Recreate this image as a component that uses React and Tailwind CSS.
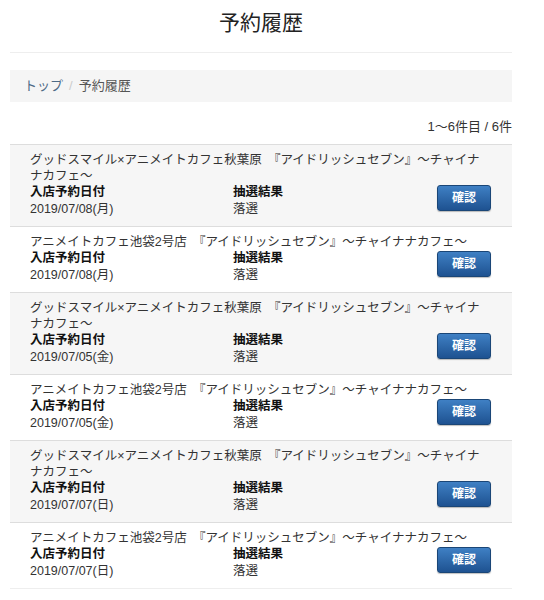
import React from 'react'

const rows = [
  { shop: 'グッドスマイル×アニメイトカフェ秋葉原', date: '2019/07/08(月)' },
  { shop: 'アニメイトカフェ池袋2号店', date: '2019/07/08(月)' },
  { shop: 'グッドスマイル×アニメイトカフェ秋葉原', date: '2019/07/05(金)' },
  { shop: 'アニメイトカフェ池袋2号店', date: '2019/07/05(金)' },
  { shop: 'グッドスマイル×アニメイトカフェ秋葉原', date: '2019/07/07(日)' },
  { shop: 'アニメイトカフェ池袋2号店', date: '2019/07/07(日)' },
]

function HistoryRow({ item, striped }) {
  return (
    <div className={`border-t border-[#dddddd] pl-[20px] pr-[21px] pt-[7px] pb-[8px] ${striped ? 'bg-[#f6f6f6]' : 'bg-white'}`}>
      <p className="leading-[16px] text-[#333]">
        {item.shop}　『アイドリッシュセブン』〜チャイナナカフェ〜
      </p>
      <div className="flex items-center">
        <div className="w-[203px]">
          <p className="font-bold leading-[17px] text-[#111]">入店予約日付</p>
          <p className="leading-[17px] text-[#333]">{item.date}</p>
        </div>
        <div className="flex-1">
          <p className="font-bold leading-[17px] text-[#111]">抽選結果</p>
          <p className="leading-[17px] text-[#333]">落選</p>
        </div>
        <button className="-mt-[6px] h-[26px] w-[54px] rounded-[3px] border border-[#1a4677] bg-gradient-to-b from-[#3f80c4] to-[#1e5291] text-[12px] font-bold text-white shadow-[0_1px_1px_rgba(0,0,0,0.25)]">
          確認
        </button>
      </div>
    </div>
  )
}

export default function App() {
  return (
    <div className="min-h-[600px] bg-white font-['Liberation_Sans','Noto_Sans_CJK_JP',sans-serif] text-[12.5px]">
      <div className="ml-[10px] w-[502px]">
        {/* ヘッダー */}
        <div className="h-[53px] border-b border-[#eeeeee] pt-[8px] text-center">
          <h1 className="text-[21px] leading-[30px] text-[#222]">予約履歴</h1>
        </div>

        {/* パンくず */}
        <div className="mt-[17px] flex h-[32px] items-center bg-[#f5f5f5] px-[14px] text-[13px]">
          <span className="text-[#4d6a86]">トップ</span>
          <span className="px-[6px] text-[#cccccc]">/</span>
          <span className="text-[#555]">予約履歴</span>
        </div>

        <p className="mt-[16px] mb-[9px] text-right text-[13px] leading-[17px] text-[#333]">1〜6件目 / 6件</p>

        <div className="border-b border-[#eeeeee]">
          {rows.map((r, i) => (
            <HistoryRow key={i} item={r} striped={i % 2 === 0} />
          ))}
        </div>
      </div>
    </div>
  )
}
